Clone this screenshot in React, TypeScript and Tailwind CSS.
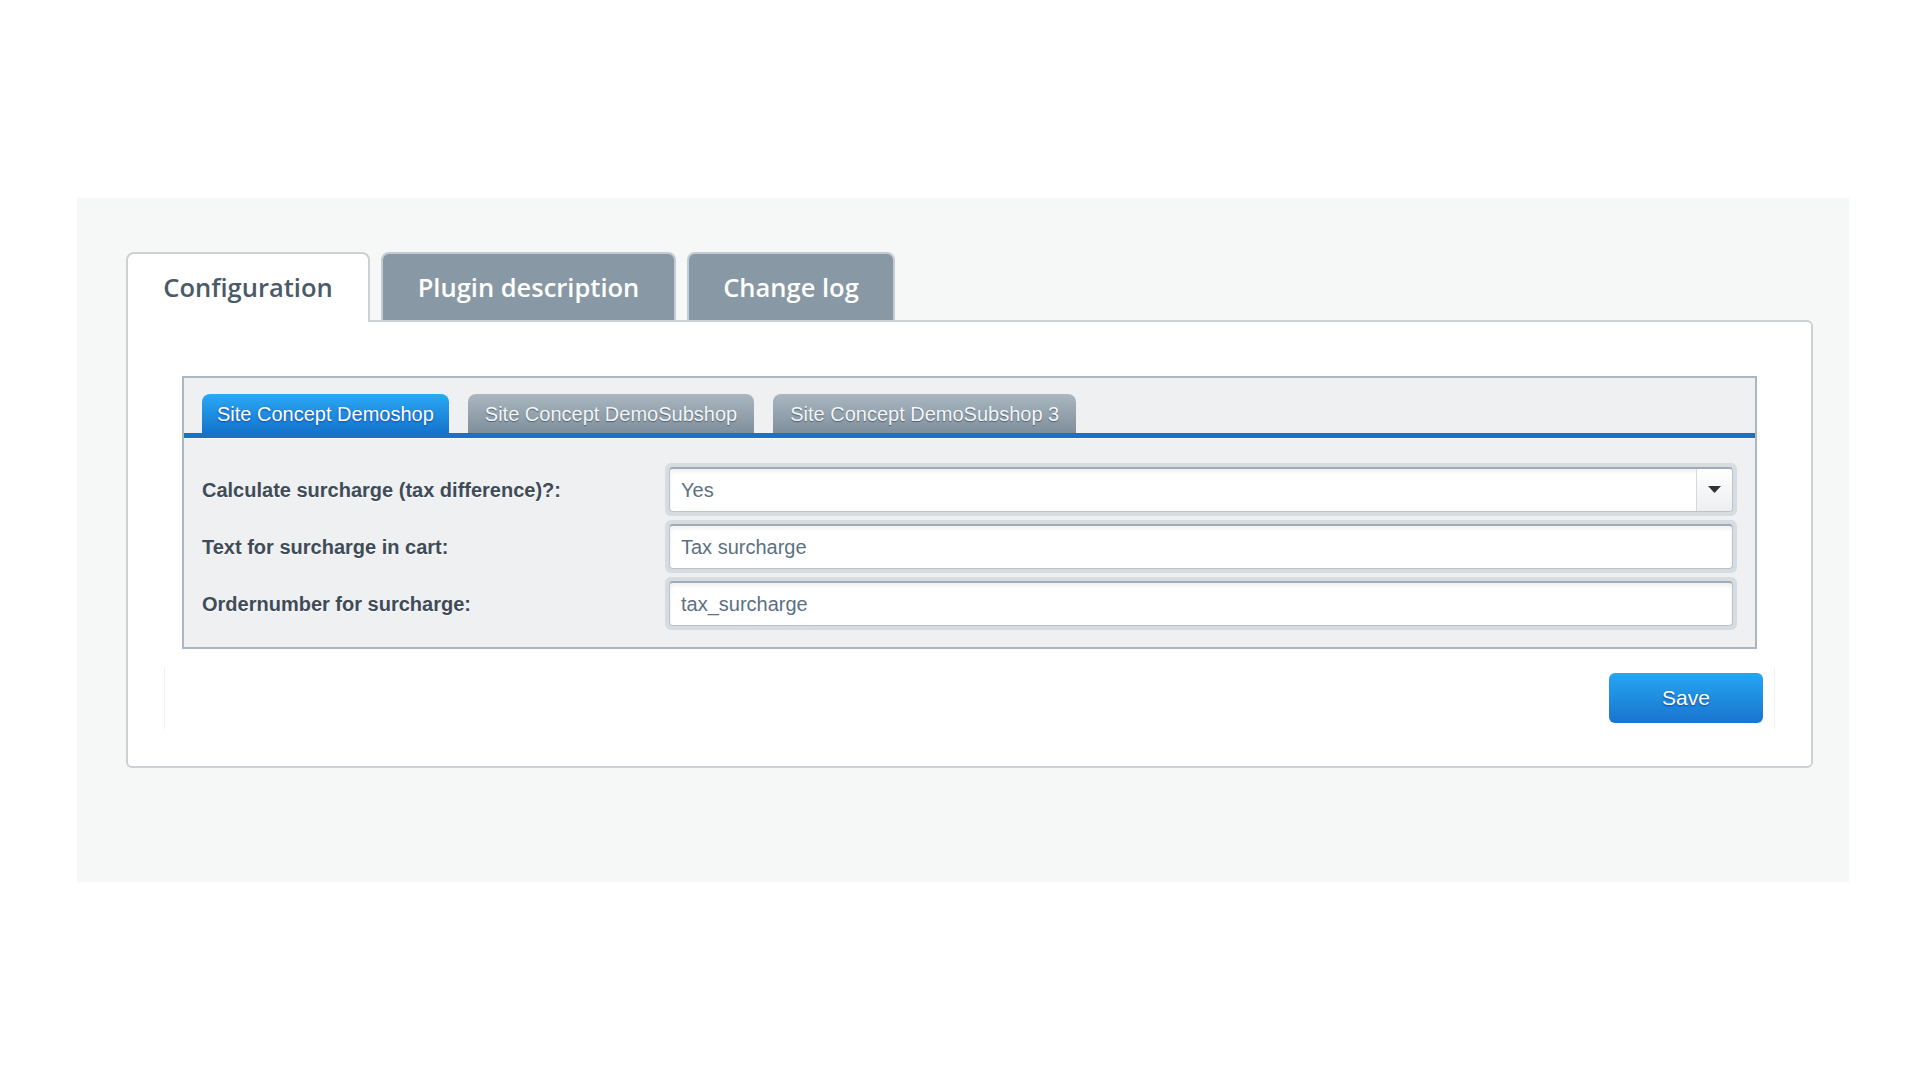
import { useState } from "react";

const mainTabs = ["Configuration", "Plugin description", "Change log"];
const shopTabs = ["Site Concept Demoshop", "Site Concept DemoSubshop", "Site Concept DemoSubshop 3"];

const FieldRing = ({ children }: { children: React.ReactNode }) => (
  <div className="flex-1 h-[53px] rounded-[6px] bg-[#d7dce1] p-[4px]">
    <div className="h-full flex items-stretch rounded-[4px] bg-white border border-[#b9c3cc] border-t-2 border-t-[#9eabb6] shadow-[inset_0_3px_4px_rgba(0,0,0,0.06)]">
      {children}
    </div>
  </div>
);

const App = () => {
  const [tab, setTab] = useState(0);
  const [shop, setShop] = useState(0);

  return (
    <div className="min-h-screen bg-white pt-[198px] pl-[77px] font-['Liberation_Sans',Arial,sans-serif]">
      <div className="w-[1772px] h-[684px] bg-[#f6f7f7] pt-[54px] px-[49px]">
        {/* top tabs */}
        <div className="flex items-start gap-[11px] font-['Open_Sans',sans-serif] font-semibold text-[25.5px]">
          {mainTabs.map((t, i) =>
            i === tab ? (
              <button
                key={t}
                onClick={() => setTab(i)}
                className="relative z-10 h-[70px] -mb-[2px] w-[244px] rounded-t-[8px] border-2 border-b-0 border-[#cdd1d4] bg-white text-[#4a5a68] pb-[2px]"
              >
                {t}
              </button>
            ) : (
              <button
                key={t}
                onClick={() => setTab(i)}
                className={`h-[68px] rounded-t-[8px] border-2 border-b-0 border-[#c3ccd2] bg-[#8898a4] text-white ${i === 1 ? "w-[295px]" : "w-[208px]"}`}
              >
                {t}
              </button>
            )
          )}
        </div>

        {/* card */}
        <div className="w-[1687px] rounded-b-[6px] rounded-tr-[6px] border-2 border-[#cdd1d4] bg-white px-[54px] pt-[54px] pb-[37px]">
          <div className="border-2 border-[#aab6c0] bg-[#eff0f2]">
            <div className="flex gap-[19px] px-[18px] pt-[16px] text-[20px]">
              {shopTabs.map((s, i) => (
                <button
                  key={s}
                  onClick={() => setShop(i)}
                  className={
                    i === shop
                      ? "h-[39px] px-[15px] rounded-t-[8px] bg-linear-to-b from-[#2ba9f3] to-[#1574cd] text-white [text-shadow:0_1px_2px_rgba(20,40,160,0.7)]"
                      : "h-[39px] px-[17px] rounded-t-[8px] bg-linear-to-b from-[#aab7c1] to-[#7f8f9b] text-[#f4f6f8] [text-shadow:0_1px_1px_rgba(40,55,70,0.6)]"
                  }
                >
                  {s}
                </button>
              ))}
            </div>
            <div className="h-[5px] bg-[#1a72c7]" />
            <div className="h-px bg-[#f8f9fa]" />

            <div className="flex flex-col gap-[4px] px-[18px] pt-[24px] pb-[17px] text-[20px]">
              <div className="flex items-center">
                <div className="w-[463px] font-bold text-[#3f4c58] [text-shadow:0_1px_0_rgba(255,255,255,0.8)]">
                  Calculate surcharge (tax difference)?:
                </div>
                <FieldRing>
                  <div className="flex-1 flex items-center px-[11px] text-[#5c7083]">Yes</div>
                  <div className="w-[36px] flex items-center justify-center border-l border-[#d3d8dc] bg-linear-to-b from-white to-[#eceef0] rounded-r-[3px]">
                    <svg width="13" height="8" viewBox="0 0 13 8">
                      <path d="M0 0 L13 0 L6.5 7 Z" fill="#2f3338" />
                    </svg>
                  </div>
                </FieldRing>
              </div>
              <div className="flex items-center">
                <div className="w-[463px] font-bold text-[#3f4c58] [text-shadow:0_1px_0_rgba(255,255,255,0.8)]">
                  Text for surcharge in cart:
                </div>
                <FieldRing>
                  <div className="flex-1 flex items-center px-[11px] text-[#5c7083]">Tax surcharge</div>
                </FieldRing>
              </div>
              <div className="flex items-center">
                <div className="w-[463px] font-bold text-[#3f4c58] [text-shadow:0_1px_0_rgba(255,255,255,0.8)]">
                  Ordernumber for surcharge:
                </div>
                <FieldRing>
                  <div className="flex-1 flex items-center px-[11px] text-[#5c7083]">tax_surcharge</div>
                </FieldRing>
              </div>
            </div>
          </div>

          {/* save row */}
          <div className="mt-[18px] mx-[-18px] h-[62px] border-x border-[#f1f2f3] flex justify-end pt-[6px] pr-[11px]">
            <button className="w-[154px] h-[50px] rounded-[6px] bg-linear-to-b from-[#26a6f2] to-[#1a74cf] text-white text-[21px] [text-shadow:0_1px_2px_rgba(10,40,120,0.7)]">
              Save
            </button>
          </div>
        </div>
      </div>
    </div>
  );
};

export default App;
